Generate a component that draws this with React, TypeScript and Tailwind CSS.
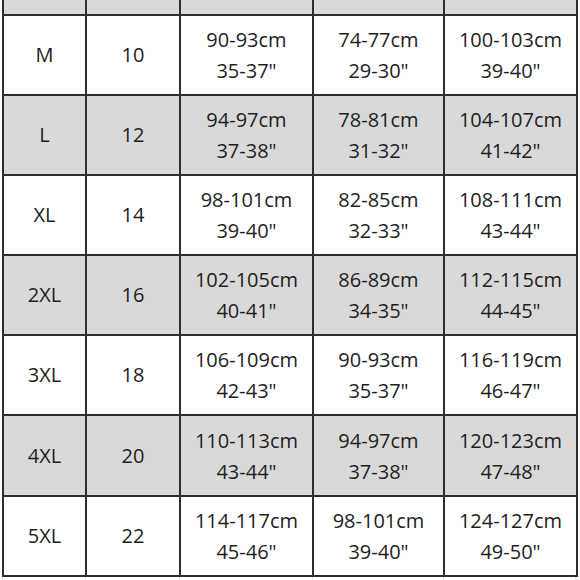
import React from "react";

const rows: [string, string, string, string, string, string, string, string][] = [
  ["M", "10", "90-93cm", '35-37"', "74-77cm", '29-30"', "100-103cm", '39-40"'],
  ["L", "12", "94-97cm", '37-38"', "78-81cm", '31-32"', "104-107cm", '41-42"'],
  ["XL", "14", "98-101cm", '39-40"', "82-85cm", '32-33"', "108-111cm", '43-44"'],
  ["2XL", "16", "102-105cm", '40-41"', "86-89cm", '34-35"', "112-115cm", '44-45"'],
  ["3XL", "18", "106-109cm", '42-43"', "90-93cm", '35-37"', "116-119cm", '46-47"'],
  ["4XL", "20", "110-113cm", '43-44"', "94-97cm", '37-38"', "120-123cm", '47-48"'],
  ["5XL", "22", "114-117cm", '45-46"', "98-101cm", '39-40"', "124-127cm", '49-50"'],
];

export default function App() {
  return (
    <div
      className="w-[580px] h-[580px] overflow-hidden bg-white text-[#1e1e1e]"
      style={{ fontFamily: '"Open Sans", "DejaVu Sans", sans-serif' }}
    >
      <div className="ml-[2px] w-[576px] grid grid-cols-[81px_92px_131px_129px_131px] grid-rows-[13.5px_repeat(7,78.2px)] gap-[2px] px-[2px] pb-[2px] bg-[#2e2e2e]">
        {[0, 1, 2, 3, 4].map((i) => (
          <div key={"h" + i} className="bg-[#d9d9d9]" />
        ))}
        {rows.map((r, ri) => {
          const bg = ri % 2 === 1 ? "bg-[#d9d9d9]" : "bg-white";
          return (
            <React.Fragment key={ri}>
              <div className={`${bg} flex items-center justify-center text-[20px]`}>{r[0]}</div>
              <div className={`${bg} flex items-center justify-center text-[20px]`}>{r[1]}</div>
              {[2, 4, 6].map((c) => (
                <div
                  key={c}
                  className={`${bg} flex flex-col items-center justify-center text-[20px] leading-[31px]`}
                >
                  <span>{r[c]}</span>
                  <span>{r[c + 1]}</span>
                </div>
              ))}
            </React.Fragment>
          );
        })}
      </div>
      <div className="ml-[2px] w-[576px] h-[10px] grid grid-cols-[83px_94px_133px_131px_133px]">
        <div className="border-l border-[#e4e4e4]" />
        <div className="border-l border-[#e4e4e4]" />
        <div className="border-l border-[#e4e4e4]" />
        <div className="border-l border-[#e4e4e4]" />
        <div className="border-l border-r border-[#e4e4e4]" />
      </div>
    </div>
  );
}
